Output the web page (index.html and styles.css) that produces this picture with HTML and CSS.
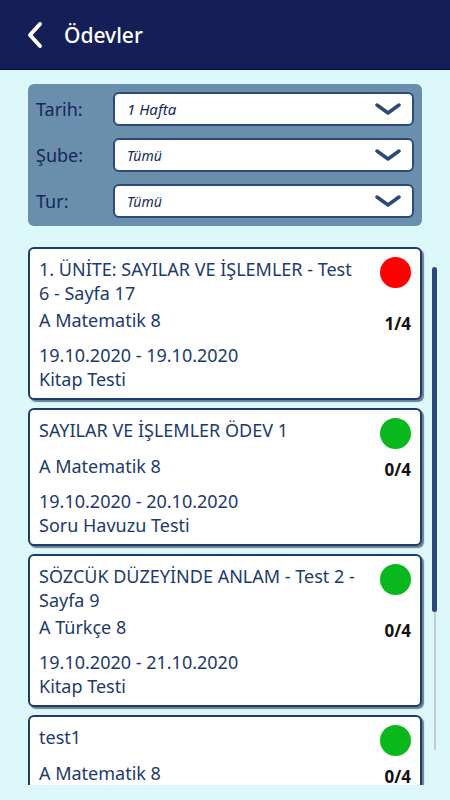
FILE: index.html
```html
<!DOCTYPE html>
<html lang="tr">
<head>
    <meta charset="UTF-8">
    <meta name="viewport" content="width=device-width, initial-scale=1.0">
    <title>Ödevler</title>
    <link rel="stylesheet" href="styles.css">
</head>
<body>
    <header class="topbar">
        <svg class="back" width="18" height="28" viewBox="0 0 18 28">
            <path d="M14 3 L4 14 L14 25" fill="none" stroke="#fff" stroke-width="4" stroke-linecap="round" stroke-linejoin="round"/>
        </svg>
        <h1>Ödevler</h1>
    </header>

    <main class="content">
        <!-- Filters -->
        <div class="filters">
            <div class="filter-row">
                <span class="filter-label">Tarih:</span>
                <div class="select">
                    <span class="select-value big">1 Hafta</span>
                    <svg class="chevron" width="26" height="12" viewBox="0 0 26 12"><path d="M2 2 L13 10 L24 2" fill="none" stroke="#2b4a75" stroke-width="3.5" stroke-linecap="round" stroke-linejoin="round"/></svg>
                </div>
            </div>
            <div class="filter-row">
                <span class="filter-label">Şube:</span>
                <div class="select">
                    <span class="select-value">Tümü</span>
                    <svg class="chevron" width="26" height="12" viewBox="0 0 26 12"><path d="M2 2 L13 10 L24 2" fill="none" stroke="#2b4a75" stroke-width="3.5" stroke-linecap="round" stroke-linejoin="round"/></svg>
                </div>
            </div>
            <div class="filter-row">
                <span class="filter-label">Tur:</span>
                <div class="select">
                    <span class="select-value">Tümü</span>
                    <svg class="chevron" width="26" height="12" viewBox="0 0 26 12"><path d="M2 2 L13 10 L24 2" fill="none" stroke="#2b4a75" stroke-width="3.5" stroke-linecap="round" stroke-linejoin="round"/></svg>
                </div>
            </div>
        </div>

        <!-- Homework list -->
        <div class="list-wrap">
            <div class="list">
                <div class="card">
                    <div class="card-top">
                        <span class="card-title">1. ÜNİTE: SAYILAR VE İŞLEMLER - Test 6 - Sayfa 17</span>
                        <span class="status red"></span>
                    </div>
                    <div class="card-mid">
                        <span>A Matematik 8</span>
                        <span class="count">1/4</span>
                    </div>
                    <div class="card-date">19.10.2020 - 19.10.2020</div>
                    <div>Kitap Testi</div>
                </div>
                <div class="card">
                    <div class="card-top">
                        <span class="card-title">SAYILAR VE İŞLEMLER ÖDEV 1</span>
                        <span class="status green"></span>
                    </div>
                    <div class="card-mid">
                        <span>A Matematik 8</span>
                        <span class="count">0/4</span>
                    </div>
                    <div class="card-date">19.10.2020 - 20.10.2020</div>
                    <div>Soru Havuzu Testi</div>
                </div>
                <div class="card">
                    <div class="card-top">
                        <span class="card-title">SÖZCÜK DÜZEYİNDE ANLAM - Test 2 - Sayfa 9</span>
                        <span class="status green"></span>
                    </div>
                    <div class="card-mid">
                        <span>A Türkçe 8</span>
                        <span class="count">0/4</span>
                    </div>
                    <div class="card-date">19.10.2020 - 21.10.2020</div>
                    <div>Kitap Testi</div>
                </div>
                <div class="card">
                    <div class="card-top">
                        <span class="card-title">test1</span>
                        <span class="status green"></span>
                    </div>
                    <div class="card-mid">
                        <span>A Matematik 8</span>
                        <span class="count">0/4</span>
                    </div>
                </div>
            </div>
            <div class="scrollbar">
                <div class="thumb"></div>
                <div class="track"></div>
            </div>
        </div>
    </main>
</body>
</html>
```

FILE: styles.css
```css
body {
    margin: 0;
    padding: 0;
    font-family: "Noto Sans", "Open Sans", sans-serif;
    background-color: #ddf8fa;
    color: #1c3a6c;
    height: 800px;
    overflow: hidden;
}
.topbar {
    background-color: #151f57;
    border-bottom: 1px solid #070c2c;
    display: flex;
    align-items: center;
    padding-left: 26px;
    box-sizing: border-box;
    height: 70px;
}
.topbar .back {
    display: block;
}
.topbar h1 {
    margin: 0 0 0 20px;
    color: #fff;
    font-size: 21px;
    font-weight: 500;
}
.content {
    padding: 14px 0 0 28px;
}
/* filter panel */
.filters {
    width: 394px;
    box-sizing: border-box;
    background-color: #6a8fad;
    border-radius: 6px;
    padding: 8px;
    display: flex;
    flex-direction: column;
    gap: 12px;
}
.filter-row {
    display: flex;
    align-items: center;
}
.filter-label {
    width: 77px;
    font-size: 18px;
    color: #16275a;
}
.select {
    flex: 1;
    height: 34px;
    box-sizing: border-box;
    background: #fff;
    border: 2px solid #2d4a76;
    border-radius: 6px;
    display: flex;
    align-items: center;
    justify-content: space-between;
    padding: 0 11px 0 12px;
}
.select-value {
    font-style: italic;
    font-size: 14px;
    color: #16275a;
}
.select-value.big {
    font-size: 15px;
}
.chevron {
    display: block;
}
/* list */
.list-wrap {
    margin-top: 21px;
    height: 538px;
    overflow: hidden;
    display: flex;
    gap: 10px;
}
.list {
    width: 394px;
    display: flex;
    flex-direction: column;
    gap: 8px;
}
.card {
    background: #fff;
    border: 2px solid #1e3d6e;
    border-radius: 6px;
    box-shadow: 2px 2px 1px #6d7f92;
    padding: 8px 9px 7px 9px;
    font-size: 18px;
    line-height: 24px;
}
.card-top {
    display: flex;
    align-items: flex-start;
    gap: 16px;
    min-height: 33px;
}
.card-title {
    flex: 1;
}
.status {
    width: 31px;
    height: 31px;
    border-radius: 50%;
    flex-shrink: 0;
}
.status.red {
    background: #ff0000;
}
.status.green {
    background: #09b81d;
}
.card-mid {
    display: flex;
    justify-content: space-between;
    margin-top: 3px;
}
.count {
    font-weight: bold;
    font-size: 17px;
    color: #111;
    padding-top: 4px;
}
.card-date {
    margin-top: 7px;
}
.scrollbar {
    margin-top: 20px;
    width: 5px;
    display: flex;
    flex-direction: column;
    align-items: center;
}
.thumb {
    width: 5px;
    height: 345px;
    background: #2b4a78;
    border-radius: 3px;
}
.track {
    width: 2px;
    height: 138px;
    background: #c4c9cb;
}
```
